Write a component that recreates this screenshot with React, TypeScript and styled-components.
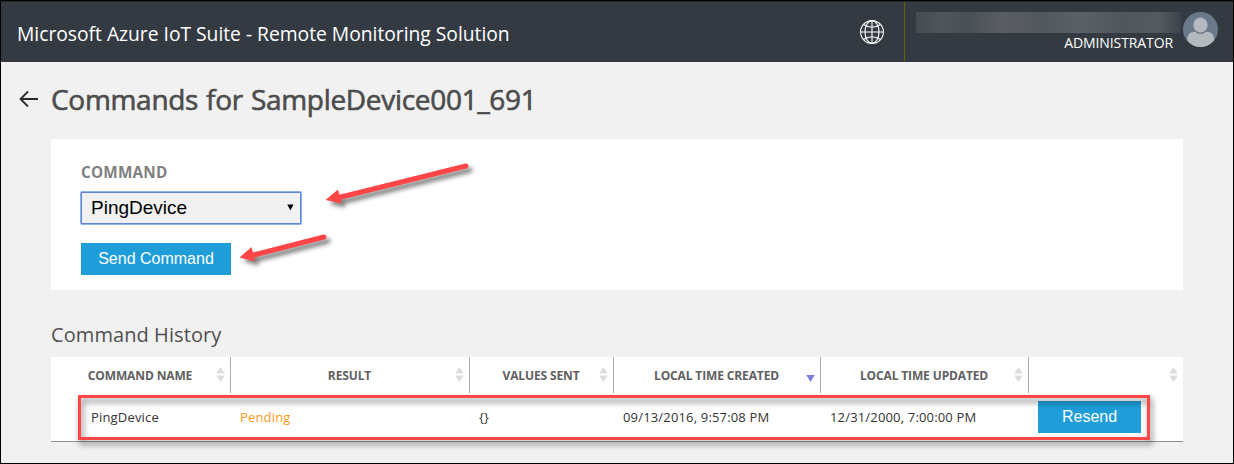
import React from "react";
import styled, { createGlobalStyle } from "styled-components";

const Global = createGlobalStyle`
  *, *::before, *::after { box-sizing: border-box; }
  body { margin: 0; background: #f1f1f1; font-family: "Open Sans", "Noto Sans", sans-serif; }
`;

const Page = styled.div`
  position: relative;
  width: 1234px;
  height: 464px;
  border: 1px solid #000;
  background: #f1f1f1;
  overflow: hidden;
`;

const Header = styled.header`
  display: flex;
  height: 61px;
  background: #343a42;
  border-top: 1px solid #23262b;
  border-bottom: 1px solid #3a3945;
  color: #fff;
`;

const Brand = styled.div`
  flex: 1;
  padding: 18px 0 0 16px;
  font-size: 19.3px;
  line-height: 28px;
  letter-spacing: -0.02px;
  white-space: nowrap;
`;

const GlobeLink = styled.div`
  width: 45px;
  padding-top: 18px;
  svg { display: block; }
`;

const Account = styled.div`
  display: flex;
  width: 329px;
  border-left: 1px solid #6b6000;
  padding: 10px 0 0 11px;
`;

const AccountText = styled.div`
  width: 265px;
  white-space: nowrap;
`;

const HiddenName = styled.div`
  height: 21px;
  background: linear-gradient(90deg, #474c54 0%, #50555c 10%, #4b5058 20%, #5a5e63 32%, #52575e 47%, #5c6067 62%, #51565c 78%, #555a60 92%, #3c424a 100%);
`;

const Role = styled.div`
  padding-right: 8px;
  text-align: right;
  font-size: 14px;
  line-height: 20px;
  letter-spacing: -0.1px;
`;

const Avatar = styled.svg`
  display: block;
  flex: none;
  margin: 0 0 0 2px;
`;

const TitleBar = styled.div`
  display: flex;
  height: 77px;
  padding-left: 17px;
`;

const BackArrow = styled.svg`
  margin-top: 28px;
  width: 22px;
  height: 18px;
`;

const Title = styled.h1`
  margin: 18px 0 0 11px;
  font-size: 28px;
  line-height: 38px;
  font-weight: 400;
  letter-spacing: -0.3px;
  word-spacing: 1px;
  -webkit-text-stroke: 0.6px #4c4c4c;
  color: #4c4c4c;
  white-space: nowrap;
`;

const Content = styled.main`
  width: 1132px;
  margin-left: 50px;
`;

const CommandPanel = styled.section`
  height: 151px;
  padding: 23px 30px 0;
  background: #fff;
`;

const FieldLabel = styled.div`
  font-size: 15.3px;
  line-height: 20px;
  font-weight: 700;
  letter-spacing: 0.2px;
  color: #808080;
`;

const SelectBox = styled.div`
  display: flex;
  align-items: center;
  justify-content: space-between;
  width: 220px;
  height: 32px;
  margin-top: 10px;
  padding: 0 6px 1px 9px;
  border: 1px solid #6087d0;
  box-shadow: 0 0 0 1px #8fb2ea;
  border-radius: 1px;
  background: #f1f1f1;
  font: 19px/28px "Liberation Sans", sans-serif;
  color: #000;
`;

const Button = styled.button<{ $width: number }>`
  display: block;
  width: ${(p) => p.$width}px;
  height: 32px;
  padding: 0;
  border: 0;
  background: #1e9dd9;
  color: #fff;
  font: 16px/30px "Liberation Sans", sans-serif;
`;

const SendRow = styled.div`
  padding-top: 19px;
`;

const Subtitle = styled.h2`
  margin: 0;
  padding-top: 29px;
  height: 67px;
  font-size: 20px;
  line-height: 31px;
  font-weight: 400;
  letter-spacing: 0.08px;
  color: #505050;
`;

const GridRow = styled.div`
  display: grid;
  grid-template-columns: 179px 239px 144px 207px 208px 155px;
  background: #fff;
`;

const HistoryTable = styled.div`
  border-bottom: 1px solid #8f8f8f;
`;

const HeadCell = styled.div`
  position: relative;
  height: 36px;
  padding-right: 1px;
  text-align: center;
  font-size: 12px;
  line-height: 37px;
  font-weight: 700;
  letter-spacing: -0.13px;
  color: #606060;
  white-space: nowrap;
  & + & { border-left: 1px solid #adadad; }
`;

const SortIcon = styled.svg`
  position: absolute;
  right: 5px;
  top: 10px;
`;

const BodyCell = styled.div<{ $indent?: number; $color?: string }>`
  height: 48px;
  padding: 8px 0 0 ${(p) => p.$indent ?? 10}px;
  font-size: 13px;
  line-height: 33px;
  letter-spacing: 0.17px;
  color: ${(p) => p.$color ?? "#333"};
  white-space: nowrap;
`;

const RowHighlight = styled.div`
  position: absolute;
  left: 77px;
  top: 394px;
  width: 1072px;
  height: 45px;
  border: 3px solid #ff4545;
  filter: drop-shadow(2px 4px 3px rgba(0, 0, 0, 0.55));
`;

const Annotations = styled.svg`
  position: absolute;
  left: 229px;
  top: 149px;
  filter: drop-shadow(4px 4px 2px rgba(0, 0, 0, 0.5));
`;

const Sorter = ({ descending }: { descending?: boolean }) => (
  <SortIcon width="9" height="15" viewBox="0 0 9 15">
    {descending ? (
      <path d="M0.3 8h8.4L4.5 15z" fill="#7b7ee0" />
    ) : (
      <path d="M0.3 6.4h8.4L4.5 0zM0.3 8.4h8.4L4.5 15z" fill="#dcdcdc" />
    )}
  </SortIcon>
);

const columns = ["COMMAND NAME", "RESULT", "VALUES SENT", "LOCAL TIME CREATED", "LOCAL TIME UPDATED", ""];

export default function App() {
  return (
    <>
      <Global />
      <Page>
        <Header>
          <Brand>Microsoft Azure IoT Suite - Remote Monitoring Solution</Brand>
          <GlobeLink>
            <svg width="26" height="26" viewBox="0 0 26 26" fill="none" stroke="#fff" strokeWidth="1.1">
              <circle cx="13" cy="12" r="11.4" />
              <ellipse cx="13" cy="12" rx="7" ry="11.4" />
              <path d="M13 .6v22.8M1.6 12h22.8M4.6 4.500q8.400 5.600 16.800 0M4.600 19.500q8.400-5.600 16.800 0" />
            </svg>
          </GlobeLink>
          <Account>
            <AccountText>
              <HiddenName />
              <Role>ADMINISTRATOR</Role>
            </AccountText>
            <Avatar width="36" height="36" viewBox="0 0 36 36">
              <clipPath id="avatar"><circle cx="17.5" cy="17.5" r="17.5" /></clipPath>
              <g clipPath="url(#avatar)">
                <rect width="36" height="36" fill="#69788a" />
                <path d="M4.300 36V27q.3-7 7-7.300h12.500q7 .3 7.300 7.300V36z" fill="#b3b9bf" />
                <ellipse cx="17.500" cy="13.500" rx="8.100" ry="8.600" fill="#69788a" />
                <ellipse cx="17.500" cy="13" rx="7.200" ry="7.500" fill="#b3b9bf" />
              </g>
            </Avatar>
          </Account>
        </Header>

        <TitleBar>
          <BackArrow viewBox="0 0 22 18" fill="none" stroke="#2b2b2b" strokeWidth="1.8">
            <path d="M20 9H2.500M10 1.500L2.500 9L10 16.500" />
          </BackArrow>
          <Title>Commands for SampleDevice001_691</Title>
        </TitleBar>

        <Content>
          <CommandPanel>
            <FieldLabel>COMMAND</FieldLabel>
            <SelectBox>
              PingDevice
              <svg width="7" height="7" viewBox="0 0 7 7"><path d="M.3 .5h6.200L3.400 6.500z" fill="#000" /></svg>
            </SelectBox>
            <SendRow>
              <Button $width={150}>Send Command</Button>
            </SendRow>
          </CommandPanel>

          <Subtitle>Command History</Subtitle>
          <HistoryTable>
            <GridRow>
              {columns.map((name, i) => (
                <HeadCell key={i}>
                  {name}
                  <Sorter descending={i === 3} />
                </HeadCell>
              ))}
            </GridRow>
            <GridRow>
              <BodyCell $indent={40}>PingDevice</BodyCell>
              <BodyCell $color="#ff9917">Pending</BodyCell>
              <BodyCell>{"{}"}</BodyCell>
              <BodyCell>09/13/2016, 9:57:08 PM</BodyCell>
              <BodyCell>12/31/2000, 7:00:00 PM</BodyCell>
              <BodyCell>
                <Button $width={103}>Resend</Button>
              </BodyCell>
            </GridRow>
          </HistoryTable>
        </Content>

        <RowHighlight />
        <Annotations width="260" height="130" viewBox="230 150 260 130" fill="#ff4545" stroke="none">
          <path d="M466 166L335 198.500M324 237L248 256.500" stroke="#ff4545" strokeWidth="5" strokeLinecap="round" />
          <path d="M325.500 200L338 189.500L341.500 203.500zM239.500 257.500L251.500 247L255 261.500z" />
        </Annotations>
      </Page>
    </>
  );
}
